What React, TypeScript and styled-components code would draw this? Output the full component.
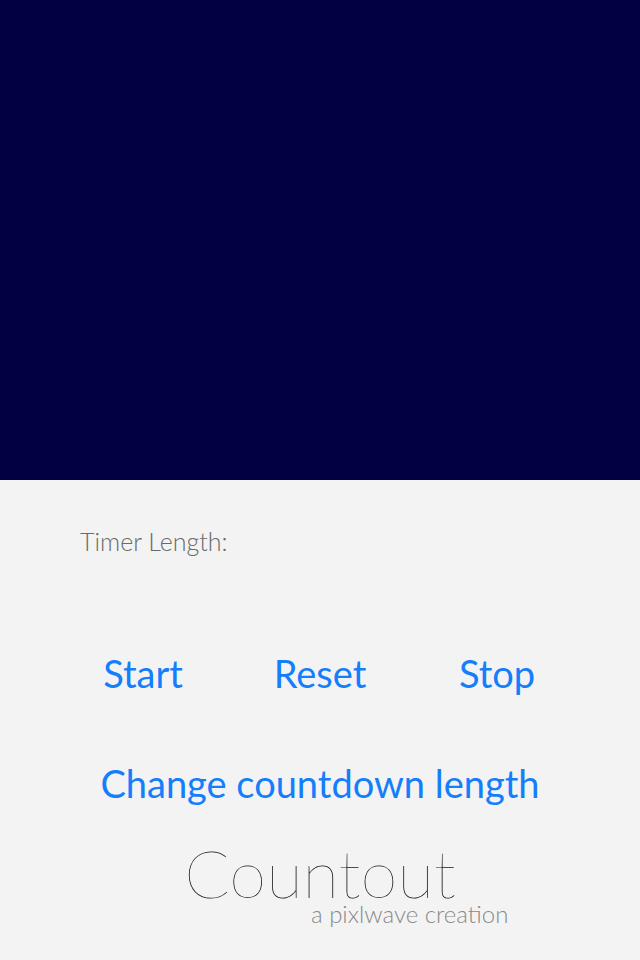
import React from "react";
import styled, { createGlobalStyle } from "styled-components";

const Global = createGlobalStyle`
  html, body { margin: 0; padding: 0; background: #f3f3f3; }
  body { font-family: Lato, "Noto Sans", sans-serif; }
`;

const Screen = styled.div`
  width: 640px;
  height: 960px;
  display: flex;
  flex-direction: column;
  background: #f3f3f3;
  overflow: hidden;
`;

const TimerPanel = styled.div`
  height: 480px;
  background: #010043;
  flex-shrink: 0;
`;

const Controls = styled.div`
  display: flex;
  flex-direction: column;
`;

const Label = styled.div`
  margin: 46px 0 0 80px;
  height: 30px;
  line-height: 30px;
  font-size: 25px;
  font-weight: 300;
  color: #6a6a6a;
`;

const ButtonRow = styled.div`
  margin-top: 92px;
  display: grid;
  grid-template-columns: repeat(3, 177px);
  justify-content: center;
`;

const TextButton = styled.button`
  background: none;
  border: none;
  padding: 0;
  font-family: Lato, "Noto Sans", sans-serif;
  font-size: 38px;
  font-weight: 400;
  line-height: 50px;
  color: #147efb;
  text-align: center;
  cursor: pointer;
`;

const WideButton = styled(TextButton)`
  margin-top: 60px;
  align-self: center;
`;

const Brand = styled.div`
  margin-top: 33px;
  display: flex;
  flex-direction: column;
`;

const Title = styled.div`
  text-align: center;
  font-size: 67px;
  font-weight: 100;
  line-height: 62px;
  color: #111;
`;

const Credit = styled.div`
  padding-left: 311px;
  font-size: 24px;
  font-weight: 300;
  line-height: 22px;
  color: #8a8a8a;
`;

export default function App() {
  return (
    <Screen>
      <Global />
      <TimerPanel />
      <Controls>
        <Label>Timer Length:</Label>
        <ButtonRow>
          <TextButton>Start</TextButton>
          <TextButton>Reset</TextButton>
          <TextButton>Stop</TextButton>
        </ButtonRow>
        <WideButton>Change countdown length</WideButton>
        <Brand>
          <Title>Countout</Title>
          <Credit>a pixlwave creation</Credit>
        </Brand>
      </Controls>
    </Screen>
  );
}
